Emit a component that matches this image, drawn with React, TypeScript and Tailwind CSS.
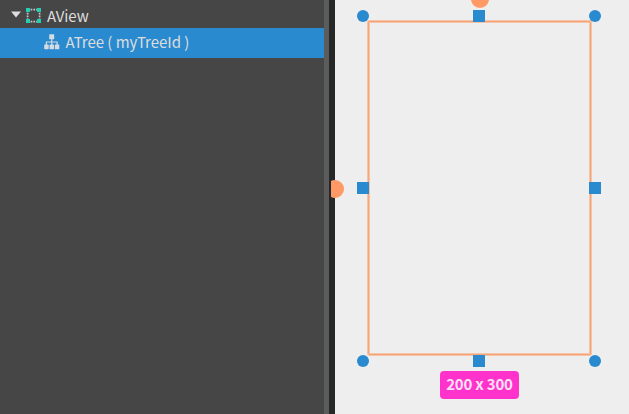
function ViewIcon() {
  return (
    <svg width="16" height="16" viewBox="0 0 16 16">
      <path
        d="M4.6 1.7h6.4M4.6 13.6h6.4M1.6 4.8v6.4M13.6 4.8v6.4"
        fill="none"
        stroke="#c8c8c8"
        strokeWidth="1.7"
        strokeDasharray="1.7 1.1"
      />
      <g fill="#22cfb2">
        <rect x="0" y="0" width="4" height="4" />
        <rect x="11" y="0" width="4" height="4" />
        <rect x="0" y="11" width="4" height="4" />
        <rect x="11" y="11" width="4" height="4" />
      </g>
    </svg>
  );
}

function TreeIcon() {
  return (
    <svg width="16" height="16" viewBox="0 0 16 16" fill="#d3dbe3">
      <rect x="5.2" y="0.3" width="5" height="5" rx="0.6" />
      <rect x="0.2" y="10.5" width="4.5" height="4.7" rx="0.6" />
      <rect x="5.5" y="10.5" width="4.5" height="4.7" rx="0.6" />
      <rect x="10.8" y="10.5" width="4.5" height="4.7" rx="0.6" />
      <path d="M7.75 5v6M2.4 11V8h10.7v3" fill="none" stroke="#d3dbe3" strokeWidth="1.2" />
    </svg>
  );
}

const handles = [
  "left-[357px] top-[9.5px] rounded-full",
  "left-[473px] top-[10px]",
  "left-[589px] top-[9.5px] rounded-full",
  "left-[357px] top-[182px]",
  "left-[589px] top-[182px]",
  "left-[357px] top-[354.5px] rounded-full",
  "left-[473px] top-[354.5px]",
  "left-[589px] top-[354.5px] rounded-full",
];

export default function App() {
  return (
    <div className="relative flex h-[414px] w-[629px] overflow-hidden bg-[#eeeeee] font-['Noto_Sans_CJK_KR','Noto_Sans',sans-serif] text-[15px]">
      <aside className="w-[324px] bg-[#464646] text-[#dddddd]">
        <div className="flex h-7 items-center pt-[3px] pl-[11px]">
          <svg className="mb-[3px]" width="10" height="7" viewBox="0 0 10 7">
            <path d="M0 0.5h10L5 6.5z" fill="#dddddd" />
          </svg>
          <span className="ml-[5px]"><ViewIcon /></span>
          <span className="ml-[5px] leading-5 tracking-[-0.1px]">AView</span>
        </div>
        <div className="flex h-[30px] items-center bg-[#2a8ad0] pl-11">
          <span className="-mt-0.5"><TreeIcon /></span>
          <span className="-mt-0.5 ml-[5.5px] leading-5 tracking-[-0.04px] whitespace-pre">ATree ( myTreeId )</span>
        </div>
      </aside>
      <div className="w-[5px] bg-[#5c5c5c]" />
      <div className="w-1.5 bg-[#262828]" />
      <main className="flex-1 pt-5 pl-8">
        <div className="h-[336px] w-[225px] rounded-[2px] border border-[#f4c4a8]">
          <div className="h-full rounded-[1px] border border-[#f8a478]">
            <div className="h-full border border-[#f4c4a8]" />
          </div>
        </div>
        <div className="mt-[15px] ml-[73px] flex h-7 w-[79px] items-center justify-center rounded-[4px] bg-[#ff33cc] pb-px font-bold tracking-[-0.2px] text-[#fbe0f5]">
          200 x 300
        </div>
      </main>
      <div className="absolute top-[-10px] left-[471px] size-[18px] rounded-full bg-[#ff9966]" />
      <div className="absolute top-[180px] left-[331px] h-[18px] w-[13px] overflow-hidden">
        <div className="-ml-[5px] size-[18px] rounded-full bg-[#ff9966]" />
      </div>
      {handles.map((place) => (
        <div key={place} className={`absolute size-3 bg-[#2a8ad0] ${place}`} />
      ))}
    </div>
  );
}
